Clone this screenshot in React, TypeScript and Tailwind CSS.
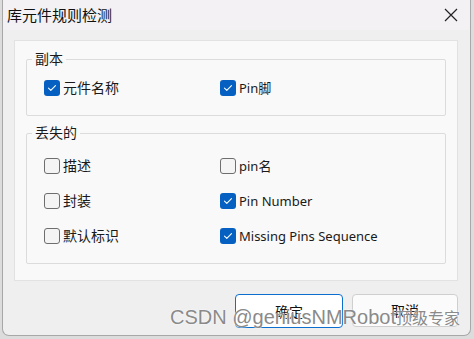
import { ReactNode } from 'react';

const Check = ({ checked }: { checked: boolean }) =>
  checked ? (
    <span className="flex h-4 w-4 shrink-0 items-center justify-center rounded-[3px] bg-[#0560c2]">
      <svg width="10" height="8" viewBox="0 0 10 8" fill="none">
        <path d="M1.5 4.2 L3.8 6.3 L8.5 1.6" stroke="white" strokeWidth="1.1" strokeLinecap="round" strokeLinejoin="round" />
      </svg>
    </span>
  ) : (
    <span className="h-4 w-4 shrink-0 rounded-[3px] border border-[#6e6e6e] bg-[#f4f4f4]" />
  );

const Item = ({ checked, cjk, children }: { checked: boolean; cjk?: boolean; children: ReactNode }) => (
  <div className="flex h-4 items-center gap-[3px] leading-none text-[#1a1a1a]">
    <Check checked={checked} />
    <span className={cjk ? 'text-[14px]' : 'text-[13px]'}>{children}</span>
  </div>
);

const Group = ({ title, className, children }: { title: string; className: string; children: ReactNode }) => (
  <fieldset className={`mx-[11px] rounded-[2px] border border-[#dcdcdc] px-0 ${className}`}>
    <legend className="ml-[5px] px-[3px] text-[14px] leading-none text-[#1a1a1a]">{title}</legend>
    {children}
  </fieldset>
);

const App = () => (
  <div className="h-[339px] w-[474px] overflow-hidden bg-[#dcdcdc] pl-[2px] font-['Noto_Sans','Noto_Sans_CJK_SC',sans-serif]">
    <div className="relative flex h-[336px] w-[469px] flex-col rounded-b-[7px] border-r border-b border-l border-[#a8a8a8] bg-[#efefef]">
      <div className="flex h-[30px] items-center justify-between bg-[#f3f1f4] pr-[12px] pl-[4px]">
        <span className="text-[15px] leading-none text-[#111]">库元件规则检测</span>
        <svg width="14" height="14" viewBox="0 0 14 14">
          <path d="M1 1 L13 13 M13 1 L1 13" stroke="#222" strokeWidth="1.2" />
        </svg>
      </div>
      <div className="mt-[10px] mr-[12px] ml-[11px] flex h-[241px] flex-col border border-[#e2e2e2] bg-[#f9f9f9] pt-[11px]">
        <Group title="副本" className="h-[64px]">
          <div className="grid grid-cols-[176px_1fr] pt-[14px] pl-[17px]">
            <Item checked cjk>元件名称</Item>
            <Item checked>Pin脚</Item>
          </div>
        </Group>
        <Group title="丢失的" className="mt-[10px] h-[138px]">
          <div className="grid grid-cols-[176px_1fr] gap-y-[19px] pt-[18px] pl-[17px]">
            <Item checked={false} cjk>描述</Item>
            <Item checked={false}>pin名</Item>
            <Item checked={false} cjk>封装</Item>
            <Item checked>Pin Number</Item>
            <Item checked={false} cjk>默认标识</Item>
            <Item checked>Missing Pins Sequence</Item>
          </div>
        </Group>
      </div>
      <div className="mt-[13px] flex justify-end gap-[9px] pr-[12px]">
        <button className="h-[34px] w-[108px] rounded-[4px] border border-[#0a6fcf] bg-white text-[14px] text-[#111]">确定</button>
        <button className="h-[33px] w-[106px] rounded-[4px] border border-[#cfcfcf] bg-[#fbfbfb] text-[14px] text-[#111]">取消</button>
      </div>
      <span className="pointer-events-none absolute top-[305px] left-[167px] font-['Liberation_Sans','Noto_Sans_CJK_SC',sans-serif] text-[20px] leading-6 text-[#8a8a8a] [text-shadow:0_0_1px_#fff,0_0_2px_#fff]">
        CSDN @geniusNMRobot<span className="text-[16px]">顶级专家</span>
      </span>
    </div>
  </div>
);

export default App;
